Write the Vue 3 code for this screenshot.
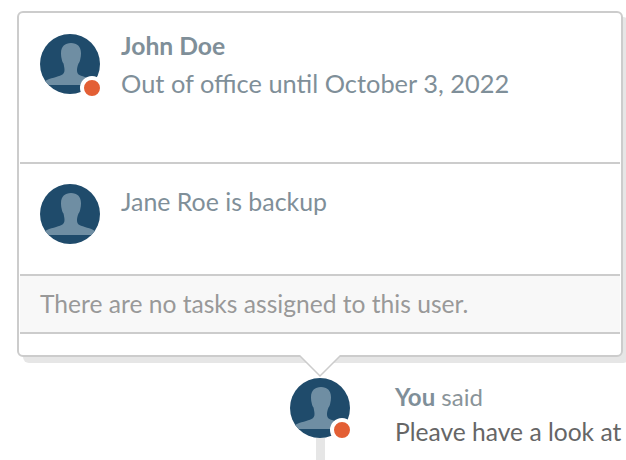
<script setup>
const silhouette = 'M31 9C25 9 21 12.500 21 19C21 21.500 21.300 23.500 21.700 25C22 27.500 22.800 28.500 23.500 29.500C24 32 24.500 34 24.500 36C24.500 38.500 23.500 40 21.500 41C18 43 10 44 5 47L5 51L55 51L55 47C51 44 43 43 39.500 41C37.500 40 37 38.500 37 36C37 34 37.500 32 38.500 29.500C39.200 28.500 40 27.500 40.300 25C40.700 23.500 41 21.500 41 19C41 12.500 37 9 31 9z'
</script>

<template>
  <div class="page">
    <div class="popover">
      <section class="status">
        <div class="avatar">
          <svg viewBox="0 0 60 60" width="60" height="60">
            <circle cx="30" cy="30" r="30" fill="#1f4b6b" />
            <clipPath id="clip-a"><circle cx="30" cy="30" r="30" /></clipPath>
            <path :d="silhouette" fill="#6f8ea3" clip-path="url(#clip-a)" />
          </svg>
          <span class="dot"></span>
        </div>
        <div class="status-text">
          <div class="name">John Doe</div>
          <div class="message">Out of office until October 3, 2022</div>
        </div>
      </section>
      <section class="backup">
        <div class="avatar">
          <svg viewBox="0 0 60 60" width="60" height="60">
            <circle cx="30" cy="30" r="30" fill="#1f4b6b" />
            <clipPath id="clip-b"><circle cx="30" cy="30" r="30" /></clipPath>
            <path :d="silhouette" fill="#6f8ea3" clip-path="url(#clip-b)" />
          </svg>
        </div>
        <div class="backup-text">Jane Roe is backup</div>
      </section>
      <section class="tasks">There are no tasks assigned to this user.</section>
      <svg class="arrow" viewBox="0 0 44 23" width="44" height="23">
        <path d="M1 0l21 21L43 0" fill="#fff" stroke="#ccc" stroke-width="1.500" />
      </svg>
    </div>
    <div class="comment">
      <div class="rail">
        <div class="avatar">
          <svg viewBox="0 0 60 60" width="60" height="60">
            <circle cx="30" cy="30" r="30" fill="#1f4b6b" />
            <clipPath id="clip-c"><circle cx="30" cy="30" r="30" /></clipPath>
            <path :d="silhouette" fill="#6f8ea3" clip-path="url(#clip-c)" />
          </svg>
          <span class="dot"></span>
        </div>
        <div class="line"></div>
      </div>
      <div class="comment-text">
        <div class="said"><b>You</b> said</div>
        <div class="body">Pleave have a look at</div>
      </div>
    </div>
  </div>
</template>

<style>
body {
  margin: 0;
  background: #fff;
}
</style>

<style scoped>
.page {
  width: 626px;
  height: 460px;
  overflow: hidden;
  padding: 11px 0 0 17px;
  box-sizing: border-box;
  font-family: Lato, sans-serif;
}
.popover {
  position: relative;
  width: 606px;
  height: 346px;
  box-sizing: border-box;
  border: 2px solid #ccc;
  border-radius: 6px;
  background: #fff;
  box-shadow: 6px 6px 0 0 #e6e6e6;
  padding: 0 1px;
}
.status {
  height: 151px;
  box-sizing: border-box;
  border-bottom: 2px solid #ccc;
  padding: 21px 0 0 20px;
  display: flex;
  gap: 21px;
}
.avatar {
  position: relative;
  width: 60px;
  height: 60px;
  flex: none;
}
.avatar svg {
  display: block;
}
.dot {
  position: absolute;
  left: 40px;
  top: 42px;
  width: 16px;
  height: 16px;
  border: 4px solid #fff;
  border-radius: 50%;
  background: #e35f35;
}
.rail .dot {
  top: 40px;
}
.status-text {
  margin-top: -3px;
}
.name {
  font-size: 24.7px;
  font-weight: 700;
  line-height: 30px;
  color: #7f8f99;
}
.message {
  font-size: 25.4px;
  line-height: 44px;
  color: #7f8f99;
}
.backup {
  height: 112px;
  box-sizing: border-box;
  border-bottom: 2px solid #ccc;
  padding: 20px 0 0 20px;
  display: flex;
  gap: 21px;
}
.backup-text {
  font-size: 24.9px;
  line-height: 34px;
  color: #7f8f99;
}
.tasks {
  height: 58px;
  box-sizing: border-box;
  border-bottom: 2px solid #ccc;
  background: #f8f8f8;
  padding: 0 0 0 20px;
  font-size: 24.6px;
  line-height: 55px;
  color: #999;
}
.arrow {
  position: absolute;
  left: 279px;
  top: 342px;
}
.comment {
  display: flex;
  margin: 21px 0 0 256px;
}
.rail {
  width: 60px;
  margin-left: 17px;
  display: flex;
  flex-direction: column;
  align-items: center;
}
.line {
  width: 9px;
  height: 30px;
  background: #e6e6e6;
}
.comment-text {
  margin-left: 45px;
}
.said {
  font-size: 24px;
  line-height: 38px;
  color: #8a9499;
}
.said b {
  color: #7f8f99;
}
.body {
  font-size: 24.6px;
  line-height: 32px;
  white-space: nowrap;
  color: #666;
}
</style>
